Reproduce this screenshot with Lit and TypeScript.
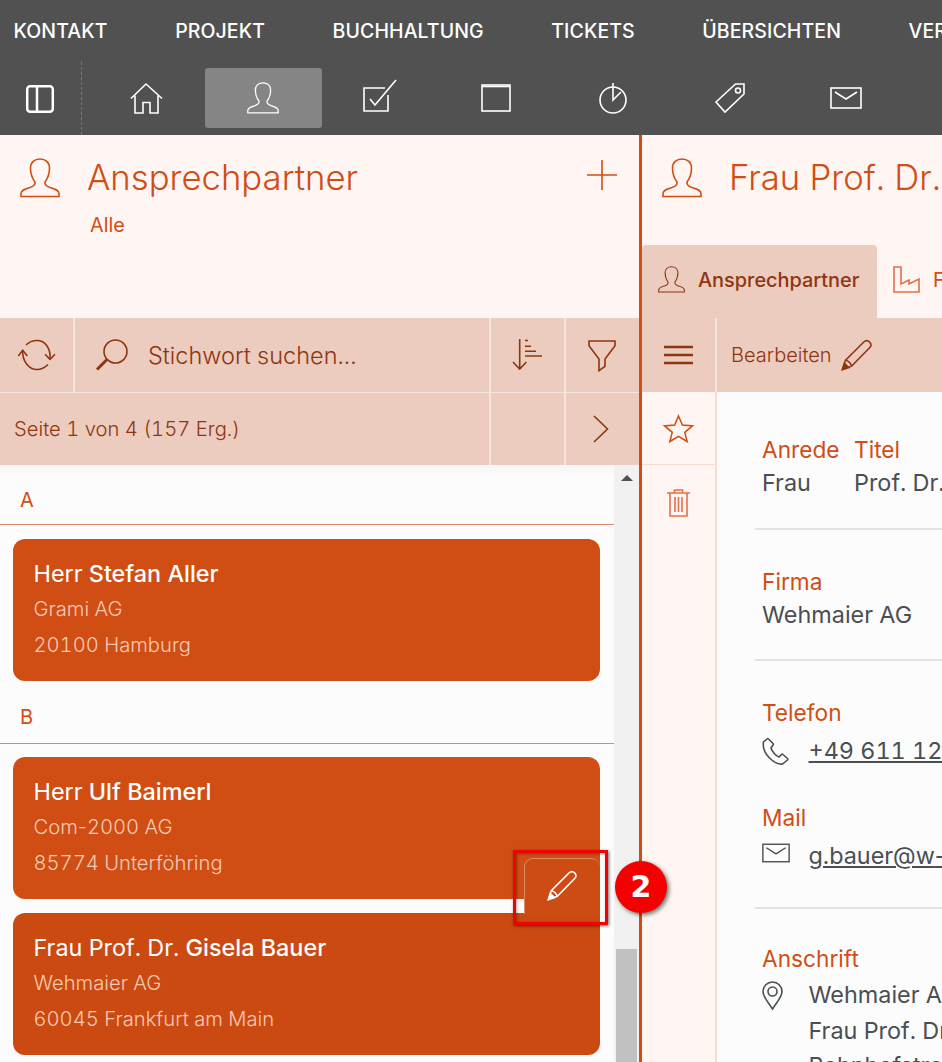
import { LitElement, css, html } from 'lit'
import { customElement } from 'lit/decorators.js'

const person = html`<svg class="ic" viewBox="0 0 40 40"><path d="M1 38.500V35.500c0-3.500 4-4.500 9-6 4.500-1.500 5.500-3 5-5.500C12 20 10.500 15 10.500 10 10.500 4.500 14.500 1 20 1s9.500 3.500 9.500 9c0 5-1.500 10-4.500 14-.5 2.500.5 4 5 5.500 5 1.500 9 2.500 9 6v3z"/></svg>`
const mail = html`<svg class="ic" viewBox="0 0 32 22"><rect x="1" y="1" width="30" height="20"/><path d="M5 5l11 7 11-7"/></svg>`
const pencil = html`<svg class="ic" viewBox="0 0 32 32"><path d="M1.500 30.500l3-9.500L23.500 2c2-2 4.500-1.500 6 0s2 4 0 6L11 27z"/><path d="M4.500 21c3 .5 5.500 3 6.500 6"/><path class="fill" d="M1.500 30.500l2-6.500 4.500 4.500z"/></svg>`

@customElement('app-root')
export class AppRoot extends LitElement {
  static styles = css`
    :host {
      display: block;
      position: relative;
      width: 942px;
      height: 1062px;
      overflow: hidden;
      font-family: Inter, 'Liberation Sans', sans-serif;
      font-feature-settings: 'tnum';
      background: #fcfcfc;
    }
    .ic {
      display: block;
      width: 100%;
      height: 100%;
      fill: none;
      stroke: currentColor;
      stroke-width: 1.600;
      overflow: visible;
    }
    .ic .fill { fill: currentColor; }
    .hy { font-feature-settings: normal; }

    /* top bars */
    .menu {
      display: flex;
      gap: 67.500px;
      height: 62px;
      padding-left: 13.500px;
      align-items: center;
      background: #515151;
      color: #fff;
      font-size: 19.500px;
      font-weight: 500;
      letter-spacing: .1px;
      white-space: nowrap;
      overflow: hidden;
    }
    .iconbar {
      display: flex;
      height: 73px;
      background: #515151;
      color: #fff;
    }
    .toggle {
      width: 81px;
      border-right: 1px dashed #777;
      display: flex;
      align-items: center;
      justify-content: center;
      box-sizing: content-box;
      color: #fff;
    }
    .toggle i { display: block; width: 28px; height: 28px; margin-left: -1px; }
    .navs { display: flex; padding-left: 6.400px; }
    .nav {
      width: 116.600px;
      height: 60px;
      margin-top: 6px;
      border-radius: 3px;
      display: flex;
      align-items: center;
      justify-content: center;
    }
    .nav.active { background: #858585; }
    .nav i { display: block; width: 32px; height: 32px; margin-left: -1px; }

    .main { display: flex; height: 927px; }
    .left { width: 639px; display: flex; flex-direction: column; }
    .split { width: 3px; background: #d14d14; }
    .right { flex: 1; min-width: 0; display: flex; flex-direction: column; }

    /* page heads */
    .head {
      height: 183px;
      box-sizing: border-box;
      background: #fff5f2;
      color: #d14d14;
      display: flex;
      flex-direction: column;
      flex: none;
      overflow: hidden;
    }
    .title { display: flex; align-items: flex-start; padding: 23px 22px 0 20px; }
    .title .person { width: 40px; height: 40px; flex: none; }
    .title h1 {
      margin: 0 0 0 27px;
      font-size: 34.700px;
      font-weight: 300;
      line-height: 39px;
      white-space: nowrap;
      flex: 1;
    }
    .title .plus { width: 30px; height: 30px; margin-top: 2px; flex: none; }
    .sub { margin: 15px 0 0 90px; font-size: 19.800px; line-height: 24px; }

    .tabs { display: flex; margin-top: auto; height: 73px; flex: none; }
    .tab {
      display: flex;
      align-items: center;
      gap: 13px;
      flex: none;
      padding: 0 17px 4px 16px;
      font-size: 19.900px;
      font-weight: 500;
      white-space: nowrap;
      border-radius: 4px 4px 0 0;
    }
    .tab.active { background: #ecccbf; color: #8e3510; width: 235px; box-sizing: border-box; }
    .tab i { display: block; width: 27px; height: 27px; flex: none; }
    .tab span { font-weight: 400; }

    /* tool rows */
    .tools {
      display: grid;
      grid-template-columns: 73px 1fr 73px 73px;
      grid-template-rows: 74px 72px;
      gap: 1px 2px;
      background: #f6e5de;
      color: #8e3510;
      flex: none;
    }
    .cell {
      background: #ecccbf;
      display: flex;
      align-items: center;
      justify-content: center;
    }
    .cell i { display: block; width: 32px; height: 32px; }
    .search { justify-content: flex-start; padding-left: 21px; gap: 20px; font-size: 23.500px; font-weight: 300; }
    .pager { grid-column: span 2; justify-content: flex-start; padding: 0 0 2px 14px; font-size: 20.200px; font-weight: 300; }

    /* list */
    .listwrap { flex: 1; min-height: 0; display: flex; }
    .list {
      flex: 1;
      background: linear-gradient(#f6f6f6, #fcfcfc 12px);
      overflow: hidden;
      position: relative;
    }
    .letter {
      display: flex;
      align-items: flex-end;
      box-sizing: border-box;
      padding: 0 0 12px 20px;
      border-bottom: 1px solid #dc8a69;
      color: #d14d14;
      font-size: 20px;
      line-height: 24px;
    }
    .letter.first { height: 60px; }
    .letter.next { height: 63px; padding-bottom: 14px; }
    .card {
      position: relative;
      margin: 14px 14px 0 13px;
      height: 142px;
      box-sizing: border-box;
      padding: 17px 20.500px 0;
      border-radius: 12px;
      background: #d04e14;
      color: #fff;
    }
    .letter.next + .card { margin-top: 13px; }
    .card.on { background: #cb4a11; border-top-right-radius: 0; }
    .name { font-size: 23.400px; line-height: 35px; white-space: nowrap; }
    .name b { font-weight: 500; }
    .line { font-size: 20.200px; font-weight: 300; line-height: 36px; color: #f6c9b4; }
    .edit {
      position: absolute;
      right: 0;
      bottom: -15px;
      width: 76px;
      height: 56px;
      box-sizing: border-box;
      padding-top: 12px;
      border: 1px solid rgba(255, 255, 255, .35);
      border-right: 0;
      border-bottom: 0;
      border-radius: 9px 9px 0 0;
      background: #cc4c14;
      display: flex;
      justify-content: center;
      z-index: 1;
    }
    .edit i { display: block; width: 30px; height: 30px; margin-left: -1px; }
    .track {
      width: 25px;
      background: #f1f1f1;
      display: flex;
      flex-direction: column;
      align-items: center;
      flex: none;
    }
    .arrow {
      width: 0;
      height: 0;
      margin-top: 10px;
      border: 6px solid transparent;
      border-top: 0;
      border-bottom: 6px solid #505050;
    }
    .thumb { width: 21px; height: 113px; margin-top: auto; background: #c1c1c1; }

    /* detail */
    .righttools {
      display: grid;
      grid-template-columns: 73px 1fr;
      gap: 2px;
      height: 74px;
      flex: none;
      background: #f6e5de;
      color: #8e3510;
    }
    .burger { width: 29px; height: 18px; }
    .burger i { width: 100%; height: 100%; }
    .editbtn {
      justify-content: flex-start;
      padding-left: 14px;
      gap: 9px;
      font-size: 20px;
      font-weight: 300;
    }
    .editbtn i { width: 31px; height: 31px; }
    .body { flex: 1; min-height: 0; display: flex; }
    .side {
      width: 73px;
      flex: none;
      background: #fff5f2;
      border-right: 2px solid #f8dcd2;
      color: #d14d14;
    }
    .side div {
      height: 73px;
      display: flex;
      align-items: center;
      justify-content: center;
      box-sizing: border-box;
    }
    .side .star { border-bottom: 1px solid #f8dcd2; }
    .side .star i { width: 29px; height: 27px; display: block; }
    .side .bin { height: 76px; }
    .side .bin i { width: 23px; height: 28px; display: block; }
    .content { flex: 1; min-width: 0; padding-left: 38px; overflow: hidden; }
    .sec {
      padding-left: 7px;
      border-bottom: 2px solid #e3e3e3;
      white-space: nowrap;
      color: #4a4f52;
      font-size: 23.400px;
      line-height: 34px;
    }
    .sec.a { padding-top: 41px; padding-bottom: 28px; }
    .sec.b { padding-top: 35px; padding-bottom: 27px; }
    .sec.c { padding-top: 35px; padding-bottom: 34px; }
    .sec.d { padding-top: 33px; border: 0; }
    .label { color: #d14d14; font-size: 22.700px; line-height: 33px; }
    .cols { display: flex; }
    .cols > div:first-child { width: 92px; flex: none; }
    .row { display: flex; align-items: flex-start; margin-top: 5px; }
    .row i { display: block; width: 46.500px; flex: none; padding-top: 4px; }
    .row i span { display: block; }
    .row a { color: inherit; }
    .next-label { margin-top: 33px; }
    .addr { line-height: 35.500px; }

    /* annotation on top of the screenshot */
    .mark {
      position: absolute;
      z-index: 2;
      left: 513px;
      top: 850px;
      width: 95px;
      height: 75px;
      box-sizing: border-box;
      border: 3px solid #f40000;
      box-shadow: 1px 1px 3px rgba(0, 0, 0, .55), inset 1px 1px 3px rgba(0, 0, 0, .35);
    }
    .badge {
      position: absolute;
      z-index: 2;
      left: 615px;
      top: 861px;
      width: 52px;
      height: 52px;
      border-radius: 50%;
      background: #f40000;
      box-shadow: 2px 2px 4px rgba(0, 0, 0, .55);
      color: #fff;
      font: bold 30px/52px 'DejaVu Sans', sans-serif;
      text-align: center;
    }
  `

  render() {
    return html`
      <div class="menu">
        <span>KONTAKT</span><span>PROJEKT</span><span>BUCHHALTUNG</span><span>TICKETS</span><span>ÜBERSICHTEN</span><span>VERWALTUNG</span>
      </div>
      <div class="iconbar">
        <div class="toggle"><i><svg class="ic" style="stroke-width:2.500" viewBox="0 0 28 28"><rect x="1.200" y="1.200" width="25.600" height="25.600" rx="3"/><path d="M11 1.500v25"/></svg></i></div>
        <div class="navs">
          <div class="nav"><i><svg class="ic" viewBox="0 0 32 32"><path d="M1 16.500L16 2l16 14.500"/><path d="M5 13.500V31h8V20.500h7V31h8V13.500"/></svg></i></div>
          <div class="nav active"><i>${person}</i></div>
          <div class="nav"><i><svg class="ic" viewBox="0 0 32 32"><path d="M25 13v16H1V6h21"/><path d="M7 17l5 6L33 -2"/></svg></i></div>
          <div class="nav"><i><svg class="ic" viewBox="0 0 32 32"><rect x="2" y="3" width="28" height="26"/><path d="M2 4.500h28" /></svg></i></div>
          <div class="nav"><i><svg class="ic" viewBox="0 0 32 32"><circle cx="16" cy="18" r="13"/><path d="M16 1v17l8-8" /></svg></i></div>
          <div class="nav"><i><svg class="ic" viewBox="0 0 32 32"><path d="M3 20L22.500 2H31V12L12 30z"/><circle cx="25" cy="8.500" r="2.500"/></svg></i></div>
          <div class="nav"><i>${mail}</i></div>
        </div>
      </div>
      <div class="main">
        <div class="left">
          <div class="head">
            <div class="title">
              <div class="person">${person}</div>
              <h1>Ansprechpartner</h1>
              <div class="plus"><svg class="ic" viewBox="0 0 30 30"><path d="M15 0v30M0 15h30"/></svg></div>
            </div>
            <div class="sub">Alle</div>
          </div>
          <div class="tools">
            <div class="cell"><i style="width:38px"><svg class="ic" viewBox="0 0 38 32"><path d="M4.700 11.500C4 22 11 30.500 19 30.500c4.500 0 8-2 11-5"/><path d="M8 6c3-3 7-4.500 11-4.500 8 0 14 7.500 13 18.800"/><path d="M.3 17l4.400-5.700L9.300 17M27 15.300l5 5 5-5"/></svg></i></div>
            <div class="cell search">
              <i><svg class="ic" viewBox="0 0 32 32"><circle cx="19.500" cy="12.500" r="11.500"/><path d="M11 20.500L1 30.500" style="stroke-width:3"/></svg></i>
              <span>Stichwort suchen...</span>
            </div>
            <div class="cell"><i><svg class="ic" viewBox="0 0 30 32"><path d="M6.700 0v30M0 23l6.700 7 6.700-7"/><path d="M12 1.500h3M12 7.300h6M12 12.300h11M12 17h17" /></svg></i></div>
            <div class="cell"><i style="width:28px;height:31px;margin-left:-2px"><svg class="ic" viewBox="0 0 28 31"><path d="M1 5.700V1h26v4.700L17 19v7.300l-6 4.400V19z"/></svg></i></div>
            <div class="cell pager">Seite 1 von 4 (157 Erg.)</div>
            <div class="cell"></div>
            <div class="cell"><i style="width:16px;height:28px;margin-left:-3px"><svg class="ic" viewBox="0 0 16 28"><path d="M1 1l13.500 13L1 27"/></svg></i></div>
          </div>
          <div class="listwrap">
            <div class="list">
              <div class="letter first">A</div>
              <div class="card">
                <div class="name">Herr <b>Stefan Aller</b></div>
                <div class="line">Grami AG</div>
                <div class="line">20100 Hamburg</div>
              </div>
              <div class="letter next">B</div>
              <div class="card">
                <div class="name">Herr <b>Ulf Baimerl</b></div>
                <div class="line">Com<span class="hy">-</span>2000 AG</div>
                <div class="line">85774 Unterföhring</div>
                <div class="edit"><i>${pencil}</i></div>
              </div>
              <div class="card on">
                <div class="name">Frau Prof. Dr. <b>Gisela Bauer</b></div>
                <div class="line">Wehmaier AG</div>
                <div class="line">60045 Frankfurt am Main</div>
              </div>
            </div>
            <div class="track"><div class="arrow"></div><div class="thumb"></div></div>
          </div>
        </div>
        <div class="split"></div>
        <div class="right">
          <div class="head">
            <div class="title">
              <div class="person">${person}</div>
              <h1>Frau Prof. Dr. Gisela Bauer</h1>
            </div>
            <div class="tabs">
              <div class="tab active"><i>${person}</i>Ansprechpartner</div>
              <div class="tab"><i><svg class="ic" style="color:#e2714a" viewBox="0 0 27 27"><path d="M1 1h7v17l8-4v4l10-5v13H1z"/></svg></i><span>Firma</span></div>
            </div>
          </div>
          <div class="righttools">
            <div class="cell"><div class="burger"><i><svg class="ic" style="stroke-width:2.500" viewBox="0 0 29 18"><path d="M0 1h29M0 9h29M0 17h29"/></svg></i></div></div>
            <div class="cell editbtn"><span>Bearbeiten</span><i>${pencil}</i></div>
          </div>
          <div class="body">
            <div class="side">
              <div class="star"><i><svg class="ic" viewBox="0 0 30 28"><path d="M15 1l4 9.500 10.500.8-8 6.700 2.500 9.500-9-5.300-9 5.300 2.500-9.500-8-6.700L11 10.500z"/></svg></i></div>
              <div class="bin"><i><svg class="ic" style="color:#e2714a" viewBox="0 0 23 28"><path d="M0 4h23M7.500 4V1h8v3M3 4v23h17V4M8 8v15M11.500 8v15M15 8v15"/></svg></i></div>
            </div>
            <div class="content">
              <div class="sec a">
                <div class="cols">
                  <div><div class="label">Anrede</div><div>Frau</div></div>
                  <div><div class="label">Titel</div><div>Prof. Dr.</div></div>
                </div>
              </div>
              <div class="sec b">
                <div class="label">Firma</div>
                <div>Wehmaier AG</div>
              </div>
              <div class="sec c">
                <div class="label">Telefon</div>
                <div class="row">
                  <i><span style="width:27px;height:27px"><svg class="ic" viewBox="0 0 27 27"><path d="M5 1L1.500 4c-1 6 2 12 6 16s9 6.500 13 6l5-4c.5-.5.5-1 0-1.500l-4.500-4c-.5-.5-1-.5-1.500 0l-2.500 2.500c-3-1-7-5.500-8-9L11 7c.5-.5.5-1 0-1.500L6.500 1c-.5-.5-1-.5-1.500 0z"/></svg></span></i>
                  <a href="#">+49 611 123456</a>
                </div>
                <div class="label next-label">Mail</div>
                <div class="row">
                  <i><span style="width:28px;height:20px">${mail}</span></i>
                  <a href="#">g.bauer@w<span class="hy">-</span>ag.de</a>
                </div>
              </div>
              <div class="sec d">
                <div class="label">Anschrift</div>
                <div class="row" style="margin-top:2px">
                  <i><span style="width:21px;height:29px"><svg class="ic" viewBox="0 0 21 29"><path d="M10.500 28C6 21 1 16 1 10.500a9.500 9.500 0 0 1 19 0C20 16 15 21 10.500 28z"/><circle cx="10.500" cy="10.500" r="4.500"/></svg></span></i>
                  <div class="addr">Wehmaier AG<br />Frau Prof. Dr. Gisela Bauer<br />Bahnhofstraße 12</div>
                </div>
              </div>
            </div>
          </div>
        </div>
      </div>
      <div class="mark"></div>
      <div class="badge">2</div>
    `
  }
}
